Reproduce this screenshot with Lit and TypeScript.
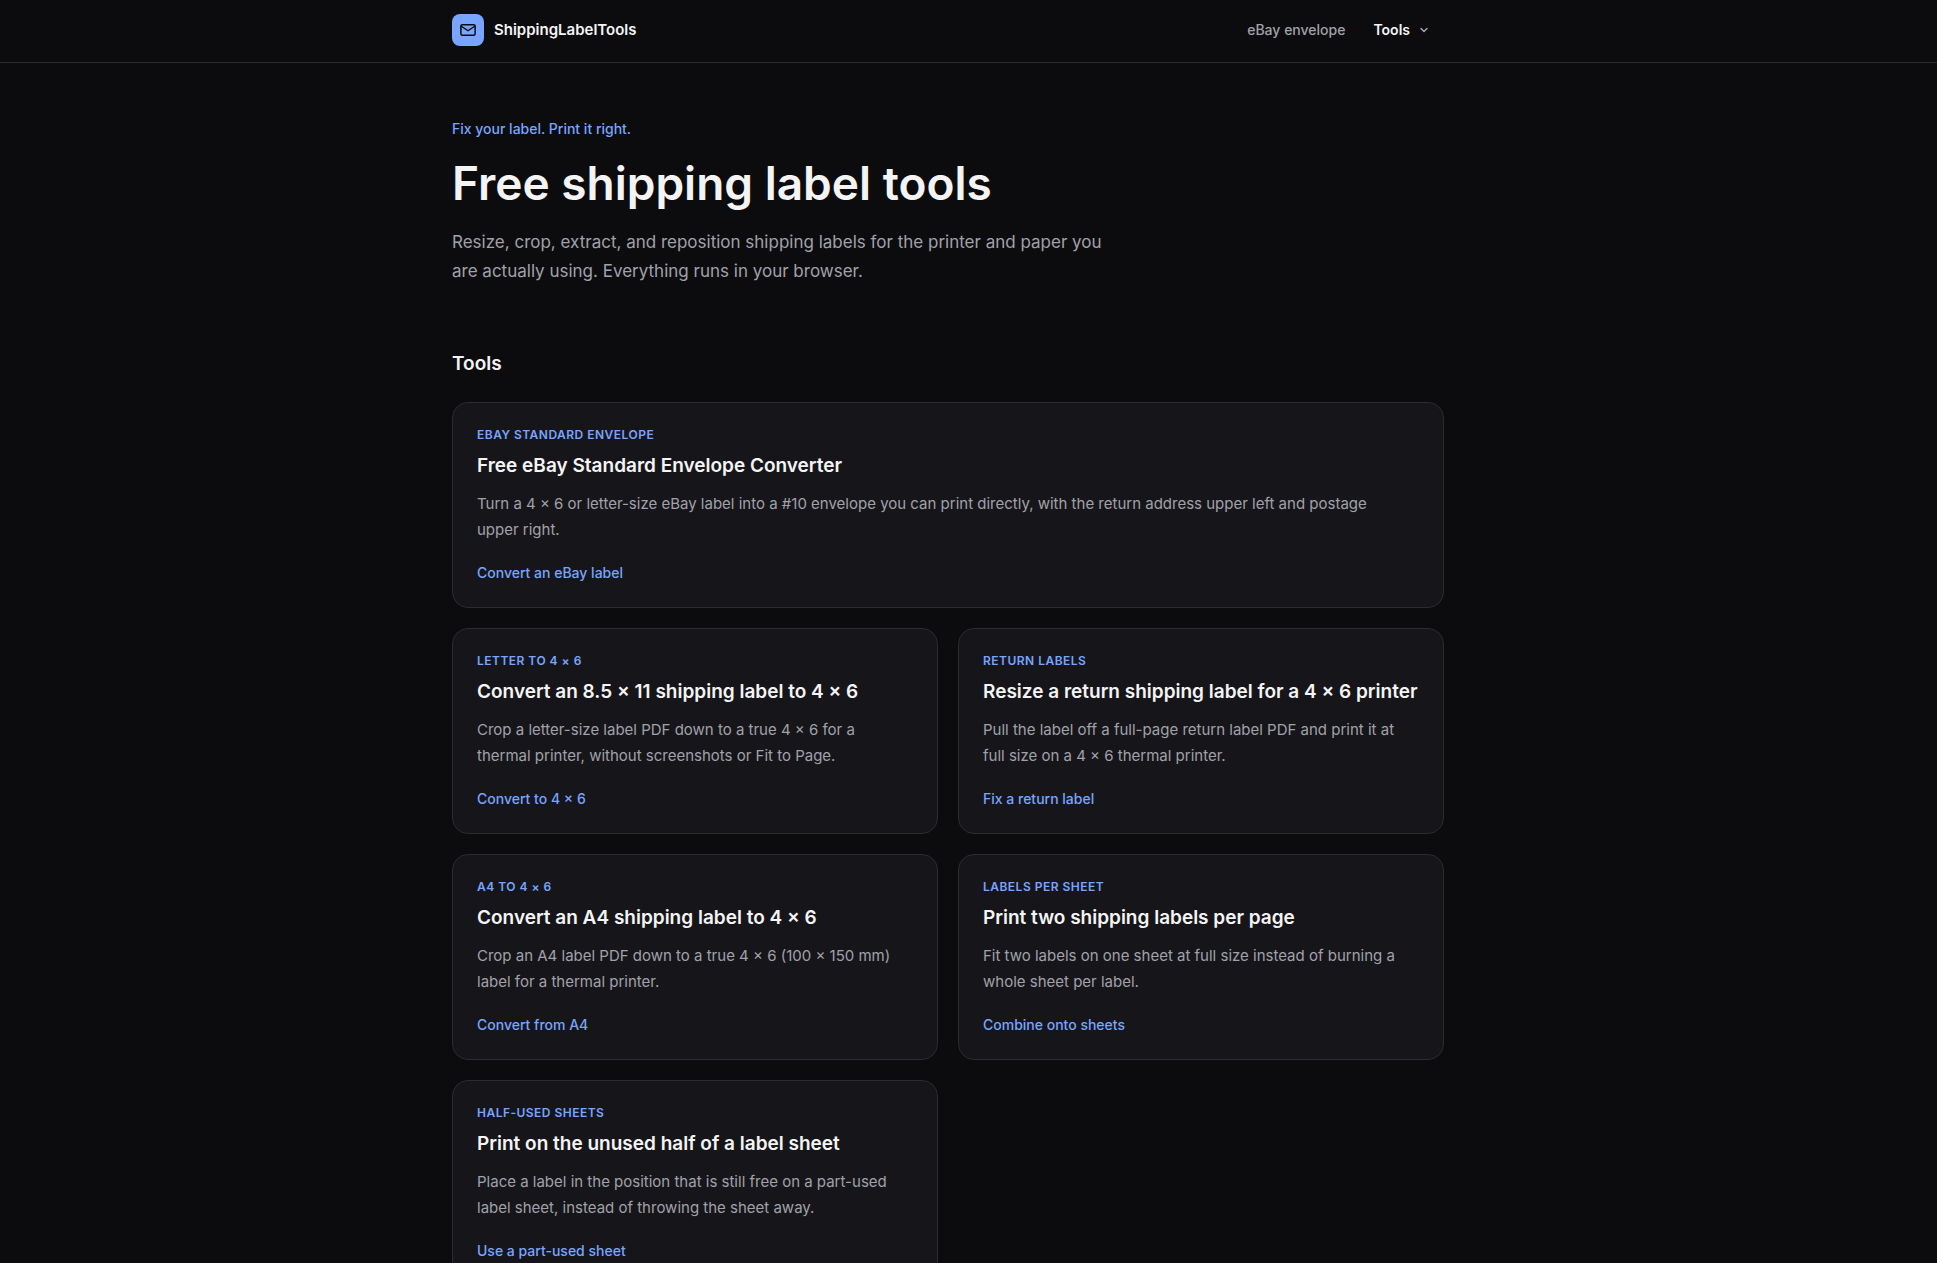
import { LitElement, html, css } from "lit";
import { customElement, property, state } from "lit/decorators.js";

interface Tool {
  tag: string;
  title: string;
  text: string;
  action: string;
  href: string;
  wide?: boolean;
}

const TOOLS: Tool[] = [
  {
    tag: "eBay Standard Envelope",
    title: "Free eBay Standard Envelope Converter",
    text: "Turn a 4 × 6 or letter-size eBay label into a #10 envelope you can print directly, with the return address upper left and postage upper right.",
    action: "Convert an eBay label",
    href: "#ebay-envelope",
    wide: true,
  },
  {
    tag: "Letter to 4 × 6",
    title: "Convert an 8.5 × 11 shipping label to 4 × 6",
    text: "Crop a letter-size label PDF down to a true 4 × 6 for a thermal printer, without screenshots or Fit to Page.",
    action: "Convert to 4 × 6",
    href: "#letter-to-4x6",
  },
  {
    tag: "Return labels",
    title: "Resize a return shipping label for a 4 × 6 printer",
    text: "Pull the label off a full-page return label PDF and print it at full size on a 4 × 6 thermal printer.",
    action: "Fix a return label",
    href: "#return-labels",
  },
  {
    tag: "A4 to 4 × 6",
    title: "Convert an A4 shipping label to 4 × 6",
    text: "Crop an A4 label PDF down to a true 4 × 6 (100 × 150 mm) label for a thermal printer.",
    action: "Convert from A4",
    href: "#a4-to-4x6",
  },
  {
    tag: "Labels per sheet",
    title: "Print two shipping labels per page",
    text: "Fit two labels on one sheet at full size instead of burning a whole sheet per label.",
    action: "Combine onto sheets",
    href: "#labels-per-sheet",
  },
  {
    tag: "Half-used sheets",
    title: "Print on the unused half of a label sheet",
    text: "Place a label in the position that is still free on a part-used label sheet, instead of throwing the sheet away.",
    action: "Use a part-used sheet",
    href: "#half-used-sheets",
  },
];

@customElement("tool-card")
export class ToolCard extends LitElement {
  @property({ attribute: false }) tool!: Tool;

  static styles = css`
    :host {
      display: block;
    }
    .card {
      display: flex;
      flex-direction: column;
      box-sizing: border-box;
      height: 100%;
      padding: 24px;
      border: 1px solid #2b2b30;
      border-radius: 16px;
      background: #16161a;
      color: inherit;
      text-decoration: none;
    }
    .tag,
    .title,
    .text {
      margin: 0;
    }
    .tag {
      color: #78a5ff;
      font-size: 12px;
      font-weight: 600;
      line-height: 16px;
      letter-spacing: 0.04em;
      text-transform: uppercase;
    }
    .title {
      margin-top: 9px;
      color: #f4f4f5;
      font-size: 19px;
      font-weight: 600;
      line-height: 28px;
    }
    .text {
      margin-top: 11px;
      padding-right: 16px;
      color: #a1a1aa;
      font-size: 15px;
      line-height: 26px;
    }
    .action {
      margin-top: 20px;
      color: #78a5ff;
      font-size: 14px;
      font-weight: 500;
      line-height: 20px;
    }
  `;

  render() {
    const { tag, title, text, action, href } = this.tool;
    return html`
      <a class="card" href=${href}>
        <p class="tag">${tag}</p>
        <h3 class="title">${title}</h3>
        <p class="text">${text}</p>
        <span class="action">${action}</span>
      </a>
    `;
  }
}

@customElement("app-root")
export class AppRoot extends LitElement {
  @state() private menuOpen = false;

  static styles = css`
    :host {
      display: block;
      min-height: 100vh;
      background: #0c0c0e;
      color: #f4f4f5;
      font-family: Inter, "Liberation Sans", sans-serif;
    }
    .header,
    .main {
      padding-right: 41px;
    }
    .header {
      border-bottom: 1px solid #2b2b30;
    }
    .container {
      box-sizing: border-box;
      max-width: 1040px;
      margin: 0 auto;
      padding: 0 24px;
    }
    .bar {
      display: flex;
      align-items: center;
      justify-content: space-between;
      min-height: 62px;
      padding-bottom: 2px;
    }
    .brand {
      display: flex;
      align-items: center;
      gap: 10px;
      color: inherit;
      font-size: 15px;
      font-weight: 600;
      line-height: 24px;
      text-decoration: none;
    }
    .mark {
      display: flex;
      align-items: center;
      justify-content: center;
      width: 32px;
      height: 32px;
      border-radius: 8px;
      background: #78a5ff;
      color: #0c0c0e;
    }
    .nav {
      display: flex;
      align-items: center;
      gap: 12px;
    }
    .link {
      color: #a1a1aa;
      font-size: 14px;
      font-weight: 500;
      line-height: 20px;
      text-decoration: none;
    }
    .menu {
      display: flex;
      align-items: center;
      gap: 8px;
      padding: 6px 14px 6px 16px;
      border: 0;
      background: none;
      color: #f4f4f5;
      font: inherit;
      font-size: 14px;
      font-weight: 600;
      line-height: 20px;
      cursor: pointer;
    }
    .chevron {
      color: #a1a1aa;
    }
    .hero {
      display: flex;
      flex-direction: column;
      max-width: 672px;
      padding-top: 56px;
    }
    .eyebrow,
    .headline,
    .lead,
    .heading {
      margin: 0;
    }
    .eyebrow {
      color: #78a5ff;
      font-size: 14px;
      font-weight: 500;
      line-height: 20px;
    }
    .headline {
      margin-top: 16px;
      font-size: 46px;
      font-weight: 600;
      line-height: 56px;
    }
    .lead {
      margin-top: 17px;
      color: #a1a1aa;
      font-size: 17px;
      line-height: 29px;
    }
    .tools {
      padding: 64px 0;
    }
    .heading {
      font-size: 19px;
      font-weight: 600;
      line-height: 28px;
    }
    .grid {
      display: grid;
      grid-template-columns: repeat(2, minmax(0, 1fr));
      gap: 20px;
      margin-top: 24px;
    }
    .wide {
      grid-column: 1 / -1;
    }
    @media (max-width: 720px) {
      .header,
      .main {
        padding-right: 0;
      }
      .grid {
        grid-template-columns: minmax(0, 1fr);
      }
    }
  `;

  private toggleMenu() {
    this.menuOpen = !this.menuOpen;
  }

  render() {
    return html`
      <header class="header">
        <div class="container bar">
          <a class="brand" href="#home">
            <span class="mark">
              <svg width="18" height="18" viewBox="0 0 24 24" fill="none" stroke="currentColor" stroke-width="2" stroke-linecap="round" stroke-linejoin="round" aria-hidden="true">
                <rect x="2.5" y="5" width="19" height="14" rx="2" />
                <path d="m3 7 9 6 9-6" />
              </svg>
            </span>
            ShippingLabelTools
          </a>
          <nav class="nav">
            <a class="link" href="#ebay-envelope">eBay envelope</a>
            <button class="menu" type="button" aria-expanded=${this.menuOpen ? "true" : "false"} @click=${this.toggleMenu}>
              Tools
              <svg class="chevron" width="12" height="12" viewBox="0 0 12 12" fill="none" stroke="currentColor" stroke-width="1.5" stroke-linecap="round" stroke-linejoin="round" aria-hidden="true">
                <path d="m3 4.5 3 3 3-3" />
              </svg>
            </button>
          </nav>
        </div>
      </header>
      <main class="main">
        <div class="container">
          <section class="hero">
            <p class="eyebrow">Fix your label. Print it right.</p>
            <h1 class="headline">Free shipping label tools</h1>
            <p class="lead">
              Resize, crop, extract, and reposition shipping labels for the printer and paper you are actually using. Everything runs in your browser.
            </p>
          </section>
          <section class="tools">
            <h2 class="heading">Tools</h2>
            <div class="grid">
              ${TOOLS.map((tool) => html`<tool-card class=${tool.wide ? "wide" : "half"} .tool=${tool}></tool-card>`)}
            </div>
          </section>
        </div>
      </main>
    `;
  }
}
